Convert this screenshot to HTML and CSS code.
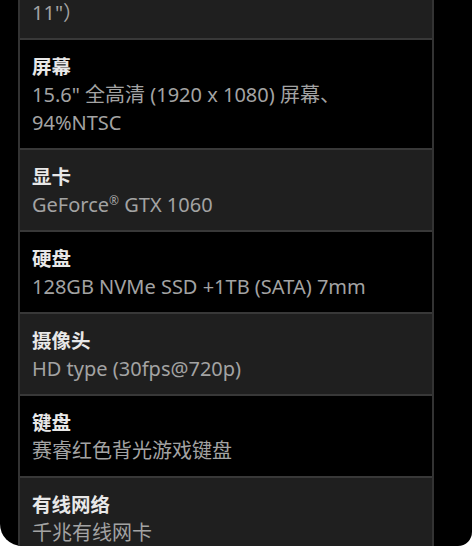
FILE: index.html
```html
<!DOCTYPE html>
<html>
<head>
    <title>配置参数</title>
    <meta http-equiv="Content-Type" content="text/html;charset=utf-8"/>
    <link rel="stylesheet" href="styles.css">
</head>
<body>
<div class="screen">
    <div class="specs">
        <div class="row tail">
            <span class="val">11"）</span>
        </div>
        <div class="row">
            <span class="name">屏幕</span>
            <span class="val">15.6" 全高清 (1920 x 1080) 屏幕、<br>94%NTSC</span>
        </div>
        <div class="row">
            <span class="name">显卡</span>
            <span class="val">GeForce<sup>®</sup> GTX 1060</span>
        </div>
        <div class="row">
            <span class="name">硬盘</span>
            <span class="val">128GB NVMe SSD +1TB (SATA) 7mm</span>
        </div>
        <div class="row">
            <span class="name">摄像头</span>
            <span class="val">HD type (30fps@720p)</span>
        </div>
        <div class="row">
            <span class="name">键盘</span>
            <span class="val">赛睿红色背光游戏键盘</span>
        </div>
        <div class="row">
            <span class="name">有线网络</span>
            <span class="val">千兆有线网卡</span>
        </div>
    </div>
</div>
</body>
</html>
```

FILE: styles.css
```css
html, body {
    margin: 0px;
    padding: 0px;
    background: #fff;
}
body {
    width: 472px;
    height: 546px;
    overflow: hidden;
    font-family: "Noto Sans", "Noto Sans CJK SC", sans-serif;
}
.screen {
    height: 546px;
    background: #000;
    overflow: hidden;
    border-radius: 0 0 14px 22px;
}
.specs {
    width: 412px;
    margin: -1px 0 0 18px;
    border-left: 2px solid #333;
    border-right: 2px solid #333;
}
.row {
    display: flex;
    flex-direction: column;
    padding: 13px 12px 11px;
    border-bottom: 2px solid #383838;
    background: #1f1f1f;
}
.row:nth-child(even) {
    background: #000;
}
.row.tail {
    padding-top: 0px;
}
.name {
    font-size: 19.5px;
    line-height: 28px;
    font-weight: bold;
    color: #e8e8e8;
}
.val {
    font-size: 20px;
    line-height: 28px;
    color: #a3a3a3;
}
.val sup {
    font-size: 12px;
    line-height: 0;
    vertical-align: 7px;
}
```
